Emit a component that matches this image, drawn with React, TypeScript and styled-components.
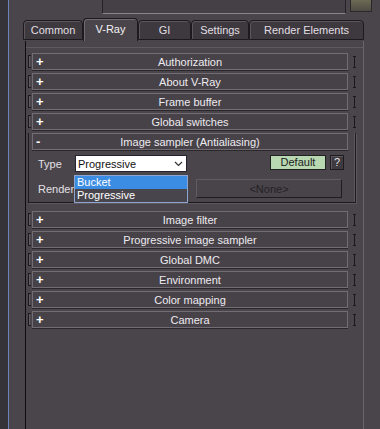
import styled, { createGlobalStyle } from 'styled-components';

const GlobalStyle = createGlobalStyle`
  body {
    margin: 0;
    background: #4a454a;
    font-family: "Liberation Sans", Arial, sans-serif;
  }
`;

const Window = styled.div`
  display: flex;
  width: 380px;
  height: 429px;
  overflow: hidden;
  background: #4a454a;
`;

const LeftEdge = styled.div`
  width: 8px;
  flex-shrink: 0;
  background: #353338;
  border-right: 1px solid #6a82bd;
`;

const Main = styled.div`
  flex: 1;
  display: flex;
  flex-direction: column;
  min-width: 0;
`;

const TopStrip = styled.div`
  display: flex;
  align-items: flex-start;
  justify-content: flex-end;
  height: 18px;
  padding-right: 8px;
`;

const TopField = styled.div`
  flex-shrink: 0;
  box-sizing: border-box;
  width: 244px;
  height: 14px;
  border-left: 1px solid #242226;
  border-right: 1px solid #242226;
  border-bottom: 1px solid #8a858b;
  background: #454046;
`;

const TopButton = styled.div`
  flex-shrink: 0;
  box-sizing: border-box;
  width: 22px;
  height: 12px;
  margin-left: 4px;
  border: 1px solid #2a282c;
  border-top: none;
  background: linear-gradient(#6c6a52, #4f4b45);
`;

const TabBar = styled.div`
  display: flex;
  align-items: flex-end;
  height: 23px;
  padding-left: 14px;
`;

const Tab = styled.div<{ $w: number; $active?: boolean }>`
  box-sizing: border-box;
  flex-shrink: 0;
  width: ${(p) => p.$w}px;
  height: ${(p) => (p.$active ? 23 : 20)}px;
  display: flex;
  align-items: center;
  justify-content: center;
  padding-bottom: ${(p) => (p.$active ? 2 : 0)}px;
  font-size: 11px;
  color: ${(p) => (p.$active ? '#f4f2f5' : '#e2dfe4')};
  background: ${(p) => (p.$active ? '#4a454a' : '#3d393e')};
  border: 1px solid #1c1a1e;
  border-bottom: ${(p) => (p.$active ? 'none' : '1px solid #1c1a1e')};
  border-radius: 4px 4px 0 0;
  box-shadow: inset 1px 1px 0 ${(p) => (p.$active ? '#6f6a72' : '#5b565d')};
  margin-bottom: ${(p) => (p.$active ? 0 : 1)}px;
  z-index: ${(p) => (p.$active ? 1 : 0)};
`;

const Page = styled.div`
  flex: 1;
  margin: 0 16px;
  border-left: 1px solid #0e0d0f;
  border-right: 1px solid #6b666c;
  padding-top: 6px;
`;

const Rollouts = styled.div`
  border-top: 1px solid #5f5a61;
  padding: 5px 0 0 2px;
`;

const Row = styled.div`
  display: flex;
  align-items: center;
  height: 17px;
  margin-bottom: 3px;
`;

const LeftBracket = styled.span`
  box-sizing: border-box;
  width: 3px;
  height: 13px;
  margin-right: 1px;
  border: 1px solid #1b191c;
  border-right: none;
  box-shadow: inset 1px 0 0 #615c63;
`;

const RightBracket = styled.span`
  box-sizing: border-box;
  width: 3px;
  height: 12px;
  margin-left: 5px;
  border-top: 1px solid #1b191c;
  border-bottom: 1px solid #1b191c;
  background: linear-gradient(to right, transparent 1px, #1b191c 1px, #1b191c 2px, transparent 2px);
`;

const Bar = styled.div`
  box-sizing: border-box;
  width: 316px;
  height: 17px;
  display: grid;
  grid-template-columns: 14px 1fr 14px;
  align-items: center;
  border: 1px solid #726d74;
  box-shadow: 0 1px 0 #2a272b;
  background: #474248;
  color: #eeebf0;
  font-size: 11px;
`;

const Sign = styled.span`
  font-weight: bold;
  font-size: 13px;
  line-height: 1;
  color: #ffffff;
  padding-left: 3px;
`;

const Title = styled.span`
  text-align: center;
  white-space: nowrap;
`;

const Expanded = styled.div`
  box-sizing: border-box;
  width: 328px;
  margin-bottom: 8px;
  border-left: 1px solid #1b191c;
  border-right: 1px solid #1b191c;
  border-bottom: 1px solid #1b191c;
  box-shadow: inset -1px 0 0 #5d585f, 1px 1px 0 #5d585f;
  padding-left: 3px;
`;

const Body = styled.div`
  position: relative;
  display: flex;
  flex-direction: column;
  box-sizing: border-box;
  height: 52px;
  padding-top: 4px;
  margin-left: -3px;
`;

const FieldRow = styled.div<{ $top: number }>`
  display: flex;
  align-items: center;
  margin-top: ${(p) => p.$top}px;
  padding: 0 11px 0 9px;
  height: 19px;
`;

const Label = styled.span`
  width: 37px;
  flex-shrink: 0;
  font-size: 11px;
  color: #e4e1e6;
`;

const Select = styled.div`
  box-sizing: border-box;
  width: 112px;
  height: 17px;
  display: flex;
  align-items: center;
  justify-content: space-between;
  padding: 0 3px 0 2px;
  background: #ffffff;
  border: 1px solid #262330;
  font-size: 11px;
  color: #111;
`;

const Spacer = styled.div`
  flex: 1;
`;

const DefaultButton = styled.div`
  box-sizing: border-box;
  width: 56px;
  height: 15px;
  margin-bottom: 3px;
  display: flex;
  align-items: center;
  justify-content: center;
  background: #b8d8b2;
  border: 1px solid #222023;
  font-size: 11px;
  color: #1c1c1c;
`;

const HelpButton = styled.div`
  box-sizing: border-box;
  width: 14px;
  height: 15px;
  margin: 0 0 3px 4px;
  display: flex;
  align-items: center;
  justify-content: center;
  background: #3e3a3f;
  border: 1px solid #1e1c1f;
  box-shadow: inset 1px 1px 0 #5e5960;
  font-size: 11px;
  color: #e6e3e8;
`;

const NoneButton = styled.div`
  box-sizing: border-box;
  width: 146px;
  height: 19px;
  margin-left: auto;
  margin-right: 2px;
  display: flex;
  align-items: center;
  justify-content: center;
  background: #49444a;
  border: 1px solid #1e1c1f;
  border-top-color: #615c63;
  border-left-color: #615c63;
  font-size: 11px;
  color: #242125;
`;

const Dropdown = styled.div`
  position: absolute;
  left: 45px;
  top: 25px;
  box-sizing: border-box;
  width: 114px;
  height: 28px;
  border: 1px solid #8ea6cf;
  background: #48454d;
  font-size: 11px;
`;

const Option = styled.div<{ $selected?: boolean }>`
  height: 13px;
  line-height: 13px;
  padding-left: 2px;
  color: #ffffff;
  background: ${(p) => (p.$selected ? '#3b8de3' : 'transparent')};
`;

const Chevron = () => (
  <svg width="9" height="6" viewBox="0 0 9 6">
    <polyline points="1,1 4.5,4.5 8,1" fill="none" stroke="#333" strokeWidth="1.2" />
  </svg>
);

const Rollout = ({ title }: { title: string }) => (
  <Row>
    <LeftBracket />
    <Bar>
      <Sign>+</Sign>
      <Title>{title}</Title>
    </Bar>
    <RightBracket />
  </Row>
);

const tabs = [
  { name: 'Common', w: 60 },
  { name: 'V-Ray', w: 55, active: true },
  { name: 'GI', w: 53 },
  { name: 'Settings', w: 58 },
  { name: 'Render Elements', w: 115 },
];

const before = ['Authorization', 'About V-Ray', 'Frame buffer', 'Global switches'];
const after = [
  'Image filter',
  'Progressive image sampler',
  'Global DMC',
  'Environment',
  'Color mapping',
  'Camera',
];

const App = () => (
  <>
    <GlobalStyle />
    <Window>
      <LeftEdge />
      <Main>
        <TopStrip>
          <TopField />
          <TopButton />
        </TopStrip>
        <TabBar>
          {tabs.map((t) => (
            <Tab key={t.name} $w={t.w} $active={t.active}>
              {t.name}
            </Tab>
          ))}
        </TabBar>
        <Page>
          <Rollouts>
            {before.map((t) => (
              <Rollout key={t} title={t} />
            ))}
            <Expanded>
              <Bar>
                <Sign>-</Sign>
                <Title>Image sampler (Antialiasing)</Title>
              </Bar>
              <Body>
                <FieldRow $top={0}>
                  <Label>Type</Label>
                  <Select>
                    <span>Progressive</span>
                    <Chevron />
                  </Select>
                  <Spacer />
                  <DefaultButton>Default</DefaultButton>
                  <HelpButton>?</HelpButton>
                </FieldRow>
                <FieldRow $top={6}>
                  <Label>Render</Label>
                  <NoneButton>&lt;None&gt;</NoneButton>
                </FieldRow>
                <Dropdown>
                  <Option $selected>Bucket</Option>
                  <Option>Progressive</Option>
                </Dropdown>
              </Body>
            </Expanded>
            {after.map((t) => (
              <Rollout key={t} title={t} />
            ))}
          </Rollouts>
        </Page>
      </Main>
    </Window>
  </>
);

export default App;
